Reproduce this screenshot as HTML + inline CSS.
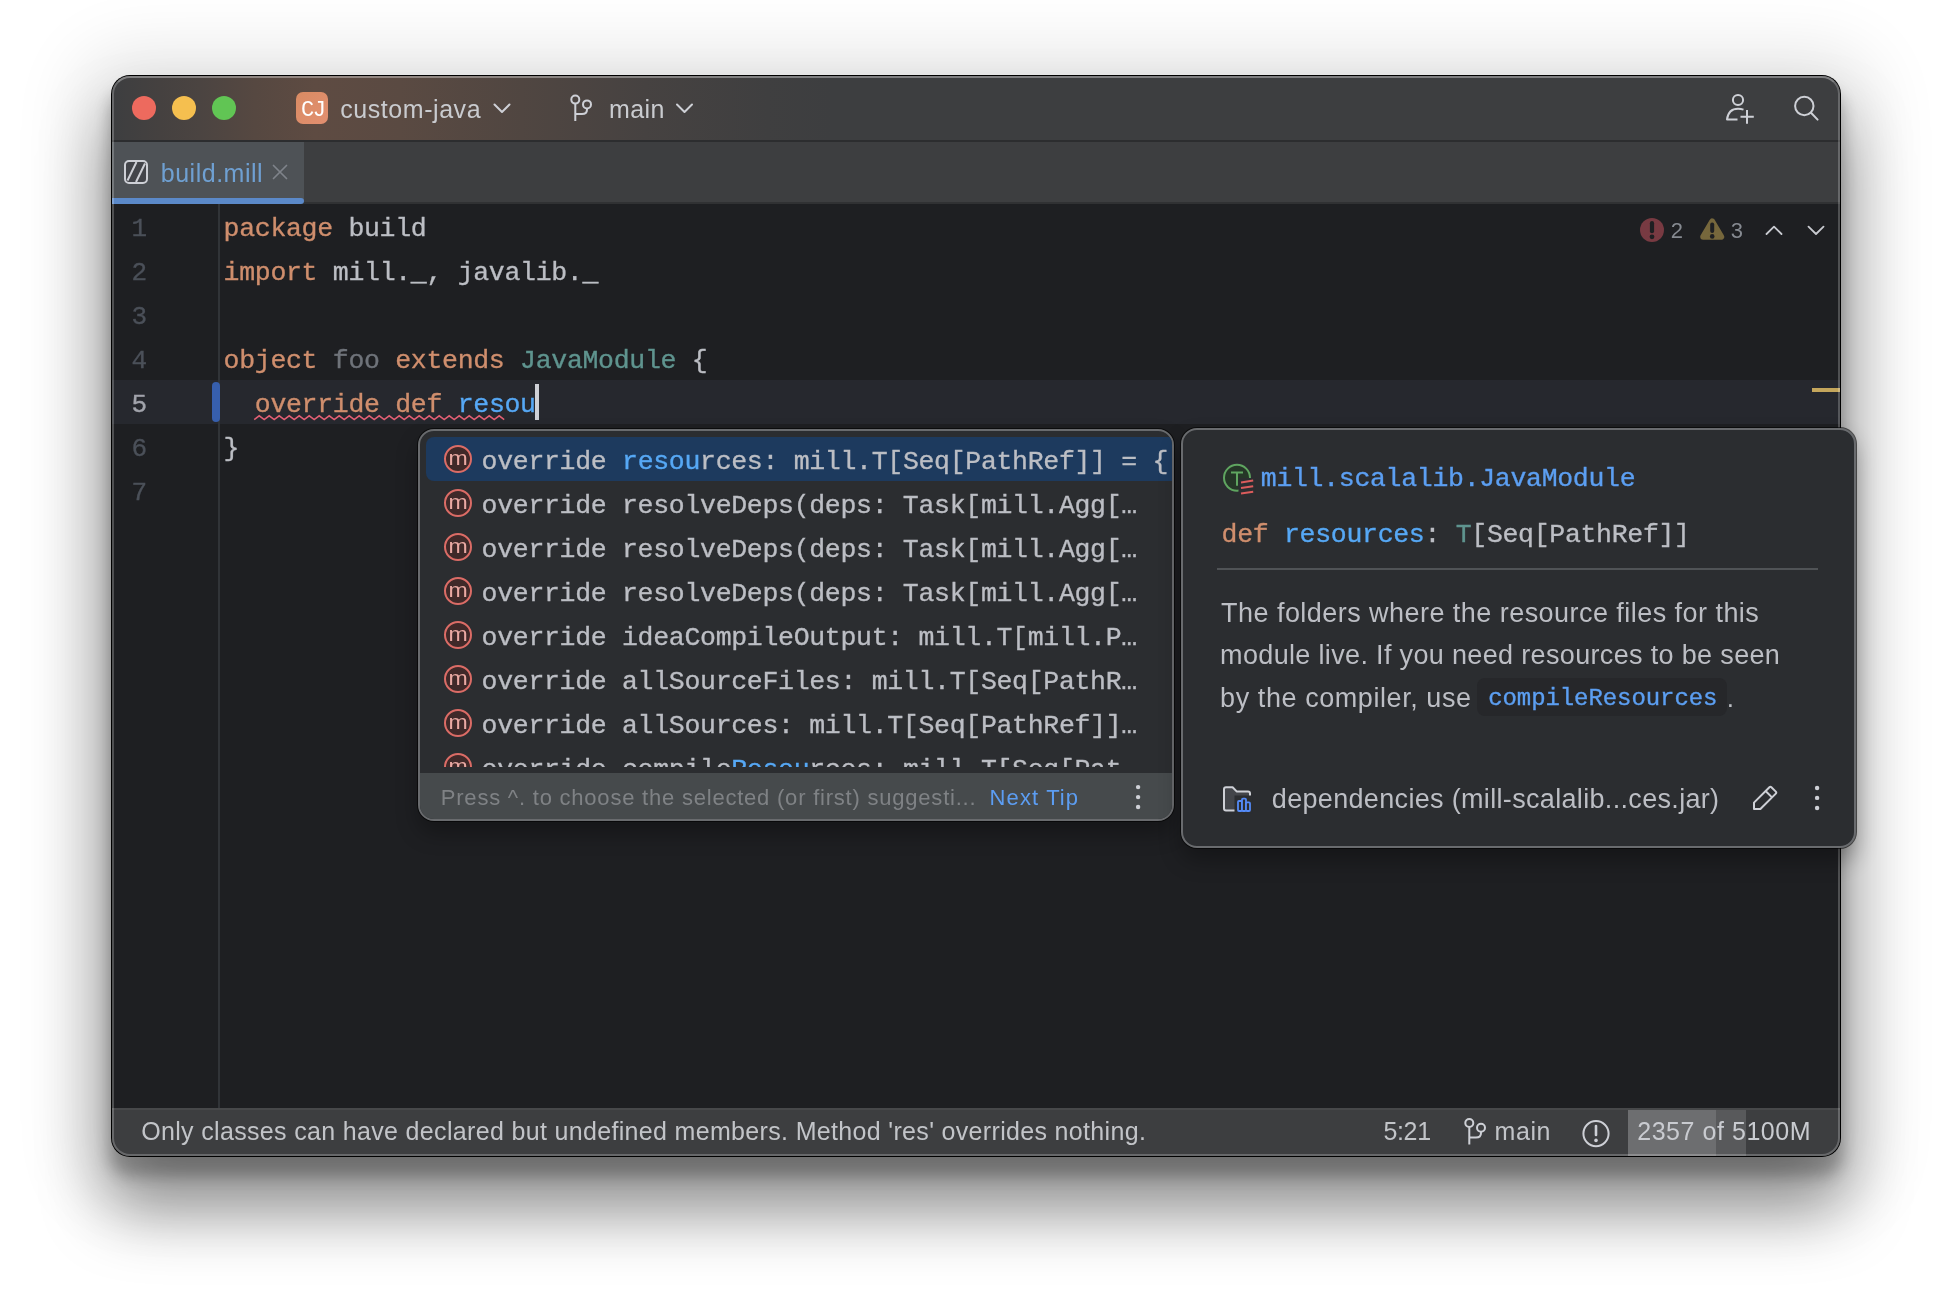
<!DOCTYPE html>
<html lang="en">
<head>
<meta charset="utf-8">
<title>build.mill – custom-java</title>
<style>
*{box-sizing:border-box;margin:0;padding:0}
html,body{width:1952px;height:1304px;overflow:hidden;background:#fff}
body{position:relative;font-family:"Liberation Sans",sans-serif;font-size:26px;color:#ced0d6}
.abs{position:absolute}
.t{position:absolute;white-space:pre;line-height:1}
.mono{font-family:"Liberation Mono",monospace}
.cl,.row .tx,.ln,.mono{-webkit-text-stroke:.35px currentColor}
/* window */
#shadow{position:absolute;left:111px;top:75px;width:1730px;height:1082px;border-radius:19px;background:#000;
 box-shadow:0 16.7px 14.8px 1.4px rgba(0,0,0,.24),0 51px 66px 3.6px rgba(0,0,0,.39),0 9.8px 67px 33px rgba(0,0,0,.10)}
#win{position:absolute;left:112px;top:76px;width:1728px;height:1080px;border-radius:18px;overflow:hidden;background:#1e1f22}
#pg{position:absolute;left:-112px;top:-76px;width:1952px;height:1304px;will-change:transform}
#hl{position:absolute;left:112px;top:76px;width:1728px;height:1080px;border-radius:18px;border:2px solid rgba(255,255,255,.22);border-top-color:rgba(255,255,255,.34);pointer-events:none}
/* title bar */
#title{left:112px;top:76px;width:1728px;height:64px;background:linear-gradient(90deg,#3d3e40 0px,#454140 48px,#4b4441 88px,#564841 143px,#5e4b42 203px,#5a4a42 288px,#504641 410px,#464241 533px,#3f3f40 656px,#3d3e40 720px,#3d3e40 100%)}
#tsep{left:112px;top:140px;width:1728px;height:2px;background:#2c2d2f}
#tabs{left:112px;top:142px;width:1728px;height:60px;background:#3d3e40}
#tabsep{left:112px;top:202px;width:1728px;height:2px;background:#303133}
#tab{left:112px;top:142px;width:192px;height:58px;background:#4e5256}
#tabul{left:112px;top:198px;width:192px;height:6px;background:#5b89c9;border-radius:0 3px 3px 0}
.dot{position:absolute;top:96px;width:24px;height:24px;border-radius:50%}
/* editor */
#gut{left:218px;top:204px;width:2px;height:904px;background:#313438}
#crow{left:112px;top:380px;width:1728px;height:44px;background:#26282e}
.ln{position:absolute;left:131.5px;width:16px;height:44px;line-height:44px;font-family:"Liberation Mono",monospace;font-size:26px;color:#4b5059;white-space:pre}
.cl{position:absolute;left:223.6px;height:44px;line-height:44px;font-family:"Liberation Mono",monospace;font-size:26.5px;letter-spacing:-.3px;color:#bcbec4;white-space:pre}
.k{color:#cf8e6d}.g{color:#6f737a}.ty{color:#5f948f}.b{color:#56a8f5}
/* status */
#status{left:112px;top:1108px;width:1728px;height:48px;background:#3d3e40;border-top:2px solid #47484a}
/* popups */
.pop{position:absolute;border-radius:16px;background:#2b2d30;border:2px solid #696b6e;box-shadow:0 0 0 1px rgba(0,0,0,.6),0 12px 22px 0 rgba(0,0,0,.3)}
#comp{left:418px;top:429px;width:756px;height:392px;overflow:hidden}
#doc{left:1181px;top:428px;width:675px;height:420px;will-change:transform}
.row{position:absolute;left:0;width:752px;height:44px}
.row .tx{position:absolute;left:61.6px;top:0;height:44px;line-height:44px;font-family:"Liberation Mono",monospace;font-size:26.5px;letter-spacing:-.3px;color:#bcbec4;white-space:pre}
.row svg{position:absolute;left:22px;top:6px}
</style>
</head>
<body>
<div id="shadow"></div>
<div id="win"><div id="pg">
<div class="abs" id="title"></div><div class="abs" id="tsep"></div>
<div class="dot" style="left:132px;background:#ed6a5e"></div>
<div class="dot" style="left:172px;background:#f5bf4f"></div>
<div class="dot" style="left:212px;background:#61c554"></div>
<div class="abs" style="left:296px;top:92px;width:32px;height:32px;border-radius:7px;background:linear-gradient(135deg,#d98b63,#e28f70)"></div>
<div class="t mono" id="cj" style="left:301px;top:100.4px;font-size:22px;color:#fff;letter-spacing:-1.4px;-webkit-text-stroke:0">CJ</div>
<div class="t" id="tproj" style="left:340.2px;top:96.6px;color:#c9cbcf;font-size:25px;letter-spacing:0.560px">custom-java</div>
<div class="t" id="tmain" style="left:609.1px;top:96.6px;color:#c9cbcf;font-size:25px;letter-spacing:0.334px">main</div>
<svg class="abs" style="left:0;top:0" width="1952" height="220" viewBox="0 0 1952 220" fill="none" stroke="#ced0d6" stroke-width="2" stroke-linecap="round" stroke-linejoin="round">
<path d="M494.5 104.5 L502 112 L509.5 104.5"/>
<path d="M677 104.5 L684.5 112 L692 104.5"/>
<circle cx="575.3" cy="99.6" r="4"/><circle cx="587" cy="104.4" r="4"/>
<path d="M575.3 103.8 V121 M587 108.6 V109.5 Q587 114 582 114 H575.3" stroke-linecap="butt"/>
<circle cx="1738" cy="100" r="5.1"/>
<path d="M1743.5 109.6 Q1741 108.8 1738 108.8 Q1728.5 108.8 1727 119.4 H1737.5" stroke-linecap="butt"/>
<path d="M1740.5 116.8 H1753.8 M1747 110 V123.8" stroke-linecap="butt"/>
<circle cx="1804.3" cy="106" r="9.2"/>
<path d="M1811 112.8 L1817.6 119.6"/>
</svg>

<div class="abs" id="tabs"></div><div class="abs" id="tabsep"></div>
<div class="abs" id="tab"></div><div class="abs" id="tabul"></div>
<svg class="abs" style="left:120px;top:156px" width="180" height="32" viewBox="120 156 180 32" fill="none" stroke-linecap="round" stroke-linejoin="round">
<rect x="125" y="161" width="22" height="22" rx="4" fill="#43454a" stroke="#ced0d6" stroke-width="2"/>
<path d="M127.5 180.5 L136.5 162 M136 182 L145 163.5" stroke="#ced0d6" stroke-width="2" stroke-linecap="butt"/>
<path d="M273.5 165.5 L286.5 178.5 M286.5 165.5 L273.5 178.5" stroke="#7f838a" stroke-width="1.7"/>
</svg>
<div class="t" id="ttab" style="left:160.8px;top:160.8px;color:#6fa0d2;font-size:25px;letter-spacing:0.508px">build.mill</div>

<div class="abs" id="crow"></div><div class="abs" id="gut"></div>
<div class="ln" style="top:207px">1</div><div class="ln" style="top:251px">2</div><div class="ln" style="top:295px">3</div><div class="ln" style="top:339px">4</div><div class="ln" style="top:383px;color:#a1a3ab">5</div><div class="ln" style="top:427px">6</div><div class="ln" style="top:471px">7</div>
<div class="cl" style="top:207px"><span class="k">package</span> build</div>
<div class="cl" style="top:251px"><span class="k">import</span> mill._, javalib._</div>
<div class="cl" style="top:339px"><span class="k">object</span> <span class="g">foo</span> <span class="k">extends</span> <span class="ty">JavaModule</span> {</div>
<div class="cl" style="top:383px">  <span class="k">override</span> <span class="k">def</span> <span class="b">resou</span></div>
<div class="cl" style="top:427px">}</div>
<div class="abs" style="left:212px;top:382px;width:8px;height:40px;border-radius:4px;background:#375fad"></div>
<div class="abs" style="left:535px;top:384px;width:4px;height:36px;background:#ced0d6"></div>
<div class="abs" style="left:1812px;top:388px;width:28px;height:4px;background:#c4a65c"></div>
<svg class="abs" style="left:250px;top:412px" width="260" height="10" viewBox="250 412 260 10" fill="none"><path id="wave" d="M254.2 419.6 L259.2 415.8 L264.2 419.6 L269.2 415.8 L274.2 419.6 L279.2 415.8 L284.2 419.6 L289.2 415.8 L294.2 419.6 L299.2 415.8 L304.2 419.6 L309.2 415.8 L314.2 419.6 L319.2 415.8 L324.2 419.6 L329.2 415.8 L334.2 419.6 L339.2 415.8 L344.2 419.6 L349.2 415.8 L354.2 419.6 L359.2 415.8 L364.2 419.6 L369.2 415.8 L374.2 419.6 L379.2 415.8 L384.2 419.6 L389.2 415.8 L394.2 419.6 L399.2 415.8 L404.2 419.6 L409.2 415.8 L414.2 419.6 L419.2 415.8 L424.2 419.6 L429.2 415.8 L434.2 419.6 L439.2 415.8 L444.2 419.6 L449.2 415.8 L454.2 419.6 L459.2 415.8 L464.2 419.6 L469.2 415.8 L474.2 419.6 L479.2 415.8 L484.2 419.6 L489.2 415.8 L494.2 419.6 L499.2 415.8 L504.2 419.6" stroke="#e15f73" stroke-width="1.5" stroke-linejoin="miter"/></svg>
<svg class="abs" style="left:1630px;top:210px" width="210" height="40" viewBox="1630 210 210 40" fill="none">
<circle cx="1652" cy="230" r="12" fill="#783a42"/>
<path d="M1652 223.2 V231.2" stroke="#1e1f22" stroke-width="4.2" stroke-linecap="round"/><circle cx="1652" cy="236.8" r="2.4" fill="#1e1f22"/>
<path d="M1712.2 221.4 L1721.2 236.8 H1703.2 Z" fill="#76673c" stroke="#76673c" stroke-width="6" stroke-linejoin="round"/>
<path d="M1712.2 224.6 V231" stroke="#1e1f22" stroke-width="4" stroke-linecap="round"/><circle cx="1712.2" cy="236.4" r="2.3" fill="#1e1f22"/>
<path d="M1766.5 234 L1774 226.6 L1781.5 234 M1808.5 226.6 L1816 234 L1823.5 226.6" stroke="#c8cad0" stroke-width="1.8" stroke-linecap="round" stroke-linejoin="round"/>
</svg>
<div class="t" id="n2" style="left:1670.8px;top:219.6px;font-size:22px;color:#868a91">2</div>
<div class="t" id="n3" style="left:1730.8px;top:219.6px;font-size:22px;color:#868a91">3</div>

<div class="abs" id="status"></div>
<div class="abs" style="left:1628px;top:1110px;width:88px;height:46px;background:#6d6e70"></div>
<div class="abs" style="left:1716px;top:1110px;width:30px;height:46px;background:#58595b"></div>
<div class="t" id="sleft" style="left:141.2px;top:1118.8px;color:#c2c4c8;font-size:25px;letter-spacing:0.333px">Only classes can have declared but undefined members. Method 'res' overrides nothing.</div>
<div class="t" id="spos" style="left:1383.4px;top:1118.8px;color:#c2c4c8;font-size:25px;letter-spacing:-0.332px">5:21</div>
<div class="t" id="smain" style="left:1494.6px;top:1118.8px;color:#c2c4c8;font-size:25px;letter-spacing:0.534px">main</div>
<div class="t" id="smem" style="left:1637.2px;top:1118.8px;color:#c9cbd0;font-size:25px;letter-spacing:0.551px">2357 of 5100M</div>
<svg class="abs" style="left:1450px;top:1110px" width="170" height="46" viewBox="1450 1110 170 46" fill="none" stroke="#ced0d6" stroke-width="2">
<circle cx="1469.3" cy="1123" r="4"/><circle cx="1481" cy="1127.8" r="4"/>
<path d="M1469.3 1127.2 V1144.4 M1481 1132 V1132.9 Q1481 1137.4 1476 1137.4 H1469.3"/>
<circle cx="1596" cy="1133.6" r="12.6"/>
<path d="M1596 1126 V1135" stroke-width="2.6" stroke-linecap="round"/><circle cx="1596" cy="1140.4" r="1.8" fill="#ced0d6" stroke="none"/>
</svg>

<div class="pop" id="comp">
<div class="abs" style="left:0;top:0;width:752px;height:336px;overflow:hidden">
<div class="abs" style="left:6px;top:6px;width:746px;height:44px;background:#1d3a5e;border-radius:8px 0 0 8px"></div>
<div class="row" style="top:6px"><svg width="32" height="32" viewBox="0 0 32 32"><circle cx="16" cy="16" r="13" fill="#402929" stroke="#db6c66" stroke-width="2"/><text x="6.4" y="21.9" textLength="19.2" lengthAdjust="spacingAndGlyphs" font-family="Liberation Sans,sans-serif" font-size="20.4" fill="#eaa9a3">m</text></svg><div class="tx" style="top:3px">override <span class="b">resou</span>rces: mill.T[Seq[PathRef]] = {</div></div>
<div class="row" style="top:50px"><svg width="32" height="32" viewBox="0 0 32 32"><circle cx="16" cy="16" r="13" fill="#402929" stroke="#db6c66" stroke-width="2"/><text x="6.4" y="21.9" textLength="19.2" lengthAdjust="spacingAndGlyphs" font-family="Liberation Sans,sans-serif" font-size="20.4" fill="#eaa9a3">m</text></svg><div class="tx" style="top:3px">override resolveDeps(deps: Task[mill.Agg[…</div></div>
<div class="row" style="top:94px"><svg width="32" height="32" viewBox="0 0 32 32"><circle cx="16" cy="16" r="13" fill="#402929" stroke="#db6c66" stroke-width="2"/><text x="6.4" y="21.9" textLength="19.2" lengthAdjust="spacingAndGlyphs" font-family="Liberation Sans,sans-serif" font-size="20.4" fill="#eaa9a3">m</text></svg><div class="tx" style="top:3px">override resolveDeps(deps: Task[mill.Agg[…</div></div>
<div class="row" style="top:138px"><svg width="32" height="32" viewBox="0 0 32 32"><circle cx="16" cy="16" r="13" fill="#402929" stroke="#db6c66" stroke-width="2"/><text x="6.4" y="21.9" textLength="19.2" lengthAdjust="spacingAndGlyphs" font-family="Liberation Sans,sans-serif" font-size="20.4" fill="#eaa9a3">m</text></svg><div class="tx" style="top:3px">override resolveDeps(deps: Task[mill.Agg[…</div></div>
<div class="row" style="top:182px"><svg width="32" height="32" viewBox="0 0 32 32"><circle cx="16" cy="16" r="13" fill="#402929" stroke="#db6c66" stroke-width="2"/><text x="6.4" y="21.9" textLength="19.2" lengthAdjust="spacingAndGlyphs" font-family="Liberation Sans,sans-serif" font-size="20.4" fill="#eaa9a3">m</text></svg><div class="tx" style="top:3px">override ideaCompileOutput: mill.T[mill.P…</div></div>
<div class="row" style="top:226px"><svg width="32" height="32" viewBox="0 0 32 32"><circle cx="16" cy="16" r="13" fill="#402929" stroke="#db6c66" stroke-width="2"/><text x="6.4" y="21.9" textLength="19.2" lengthAdjust="spacingAndGlyphs" font-family="Liberation Sans,sans-serif" font-size="20.4" fill="#eaa9a3">m</text></svg><div class="tx" style="top:3px">override allSourceFiles: mill.T[Seq[PathR…</div></div>
<div class="row" style="top:270px"><svg width="32" height="32" viewBox="0 0 32 32"><circle cx="16" cy="16" r="13" fill="#402929" stroke="#db6c66" stroke-width="2"/><text x="6.4" y="21.9" textLength="19.2" lengthAdjust="spacingAndGlyphs" font-family="Liberation Sans,sans-serif" font-size="20.4" fill="#eaa9a3">m</text></svg><div class="tx" style="top:3px">override allSources: mill.T[Seq[PathRef]]…</div></div>
<div class="row" style="top:314px"><svg width="32" height="32" viewBox="0 0 32 32"><circle cx="16" cy="16" r="13" fill="#402929" stroke="#db6c66" stroke-width="2"/><text x="6.4" y="21.9" textLength="19.2" lengthAdjust="spacingAndGlyphs" font-family="Liberation Sans,sans-serif" font-size="20.4" fill="#eaa9a3">m</text></svg><div class="tx" style="top:3px">override compile<span class="b">Resou</span>rces: mill.T[Seq[Pat…</div></div>
</div>
<div class="abs" id="cfoot" style="left:0;top:342px;width:752px;height:46px;background:#464a4c"><div class="t" id="ftip" style="left:20.8px;top:13.6px;font-size:22px;color:#7f8285;letter-spacing:0.783px">Press ^. to choose the selected (or first) suggesti...</div><div class="t" id="fnext" style="left:569.6px;top:13.6px;font-size:22px;color:#5c9df2;letter-spacing:1.117px">Next Tip</div><svg class="abs" style="left:708px;top:8px" width="20" height="32" viewBox="0 0 20 32" fill="#ced0d6"><circle cx="10.1" cy="6.1" r="2.2"/><circle cx="10.1" cy="16.1" r="2.2"/><circle cx="10.1" cy="26" r="2.2"/></svg></div>
</div>

</div></div>
<div id="hl"></div>
<div class="pop" id="doc">
<svg class="abs" style="left:36px;top:30px" width="40" height="40" viewBox="1219 460 40 40" fill="none">
<circle cx="1237" cy="477.8" r="13" fill="#253627" stroke="#5fa560" stroke-width="2"/>
<path d="M1231 472.4 H1243 M1237 472.4 V485.8" stroke="#5fa560" stroke-width="2"/>
<rect x="1238.5" y="478" width="17" height="18" fill="#2b2d30"/>
<path d="M1241 482.4 L1253.2 480.6 M1241 488 L1253.2 486.2 M1241 493.6 L1253.2 491.8" stroke="#db5c5c" stroke-width="2"/>
</svg>
<div class="t mono" id="dfq" style="left:77.8px;top:36.2px;font-size:26.5px;letter-spacing:-.3px;color:#5c9ff2">mill.scalalib.JavaModule</div>
<div class="t mono" id="dsig" style="left:38.6px;top:91.5px;font-size:26.5px;letter-spacing:-.3px;color:#bcbec4"><span class="k">def</span> <span class="b">resources</span>: <span class="ty">T</span>[Seq[PathRef]]</div>
<div class="abs" style="left:34px;top:138px;width:601px;height:2px;background:#505356"></div>
<div class="t" id="dl1" style="left:38.1px;top:169.9px;color:#bcbec4;font-size:27px;letter-spacing:0.454px">The folders where the resource files for this</div>
<div class="t" id="dl2" style="left:37.1px;top:212.4px;color:#bcbec4;font-size:27px;letter-spacing:0.340px">module live. If you need resources to be seen</div>
<div class="t" id="dl3" style="left:37.1px;top:254.5px;color:#bcbec4;font-size:27px;letter-spacing:0.569px">by the compiler, use</div>
<div class="abs" style="left:294px;top:248px;width:250px;height:38px;border-radius:8px;background:#26272a"></div>
<div class="t mono" id="dcode" style="left:305.2px;top:257.2px;font-size:24px;letter-spacing:-.08px;color:#5c9ff2">compileResources</div>
<div class="t" id="ddot" style="left:543.8px;top:254.6px;color:#bcbec4">.</div>
<svg class="abs" style="left:36px;top:350px" width="40" height="40" viewBox="1219 780 40 40" fill="none" stroke-linejoin="round">
<path d="M1224 789.2 Q1224 787.2 1226 787.2 H1232.6 L1236.6 791.4 H1248 Q1250 791.4 1250 793.4 V808.6 Q1250 810.6 1248 810.6 H1226 Q1224 810.6 1224 808.6 Z" fill="#43454a" stroke="#ced0d6" stroke-width="2"/>
<rect x="1234.5" y="795.5" width="18" height="18" fill="#2b2d30"/>
<rect x="1238" y="801" width="4" height="10" rx="1" fill="#2b2d30" stroke="#548af7" stroke-width="1.8"/>
<rect x="1242" y="798.6" width="4" height="12.4" rx="1" fill="#2b2d30" stroke="#548af7" stroke-width="1.8"/>
<rect x="1246" y="802.4" width="4" height="8.6" rx="1" fill="#2b2d30" stroke="#548af7" stroke-width="1.8"/>
</svg>
<div class="t" id="dfoot" style="left:88.8px;top:356.1px;color:#bcbec4;font-size:27px;letter-spacing:0.328px">dependencies (mill-scalalib...ces.jar)</div>
<svg class="abs" style="left:560px;top:346px" width="100" height="44" viewBox="1743 776 100 44" fill="none" stroke="#ced0d6" stroke-width="2" stroke-linejoin="round">
<path d="M1754 809 V802.6 L1769.4 787.2 Q1770.4 786.2 1771.4 787.2 L1775.8 791.6 Q1776.8 792.6 1775.8 793.6 L1760.4 809 Z M1765.6 791 L1772 797.4"/>
<circle cx="1817.1" cy="788" r="2.2" fill="#ced0d6" stroke="none"/><circle cx="1817.1" cy="797.9" r="2.2" fill="#ced0d6" stroke="none"/><circle cx="1817.1" cy="808" r="2.2" fill="#ced0d6" stroke="none"/>
</svg>
</div>

</body>
</html>
